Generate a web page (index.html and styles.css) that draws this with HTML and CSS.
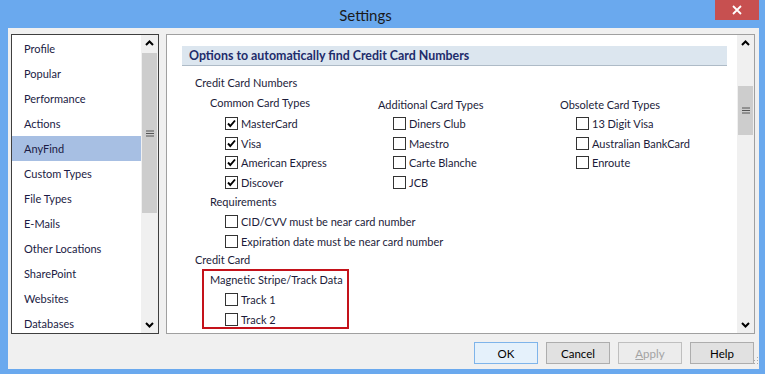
FILE: index.html
```html
<!DOCTYPE html>
<html lang="en">
<head>
  <meta charset="UTF-8" />
  <title>Settings</title>
  <link rel="stylesheet" href="styles.css">
</head>
<body>
  <div class="window">
    <div class="titlebar">
      <div class="title">Settings</div>
      <button class="close-btn">
        <svg width="10" height="10" viewBox="0 0 10 10"><path d="M1 1 L9 9 M9 1 L1 9" stroke="#fff" stroke-width="1.8"/></svg>
      </button>
    </div>

    <div class="dialog">
      <div class="main">
        <div class="nav">
          <ul class="nav-items">
            <li>Profile</li>
            <li>Popular</li>
            <li>Performance</li>
            <li>Actions</li>
            <li class="selected">AnyFind</li>
            <li>Custom Types</li>
            <li>File Types</li>
            <li>E-Mails</li>
            <li>Other Locations</li>
            <li>SharePoint</li>
            <li>Websites</li>
            <li>Databases</li>
          </ul>
          <div class="scrollbar">
            <div class="arrow">
              <svg width="17" height="17" viewBox="0 0 17 17"><path d="M5 10 L8.5 6.5 L12 10" fill="none" stroke="#000" stroke-width="2"/></svg>
            </div>
            <div class="thumb nav-thumb">
              <svg width="8" height="7" viewBox="0 0 8 7"><path d="M0 1 H8 M0 3.5 H8 M0 6 H8" stroke="#555" stroke-width="1"/></svg>
            </div>
            <div class="track"></div>
            <div class="arrow">
              <svg width="17" height="17" viewBox="0 0 17 17"><path d="M5 7 L8.5 10.5 L12 7" fill="none" stroke="#000" stroke-width="2"/></svg>
            </div>
          </div>
        </div>

        <div class="panel">
          <div class="panel-content">
            <div class="section-head">Options to automatically find Credit Card Numbers</div>

            <div class="label lvl1 first">Credit Card Numbers</div>

            <div class="cols">
              <div class="col col-common">
                <div class="col-head">Common Card Types</div>
                <div class="check"><span class="box on"><svg width="11" height="11" viewBox="0 0 11 11"><path d="M2 5.5 L4.3 8 L9 2.5" fill="none" stroke="#000" stroke-width="1.9"/></svg></span>MasterCard</div>
                <div class="check"><span class="box on"><svg width="11" height="11" viewBox="0 0 11 11"><path d="M2 5.5 L4.3 8 L9 2.5" fill="none" stroke="#000" stroke-width="1.9"/></svg></span>Visa</div>
                <div class="check"><span class="box on"><svg width="11" height="11" viewBox="0 0 11 11"><path d="M2 5.5 L4.3 8 L9 2.5" fill="none" stroke="#000" stroke-width="1.9"/></svg></span>American Express</div>
                <div class="check"><span class="box on"><svg width="11" height="11" viewBox="0 0 11 11"><path d="M2 5.5 L4.3 8 L9 2.5" fill="none" stroke="#000" stroke-width="1.9"/></svg></span>Discover</div>
              </div>
              <div class="col col-additional">
                <div class="col-head low">Additional Card Types</div>
                <div class="check"><span class="box"></span>Diners Club</div>
                <div class="check"><span class="box"></span>Maestro</div>
                <div class="check"><span class="box"></span>Carte Blanche</div>
                <div class="check"><span class="box"></span>JCB</div>
              </div>
              <div class="col col-obsolete">
                <div class="col-head low">Obsolete Card Types</div>
                <div class="check"><span class="box"></span>13 Digit Visa</div>
                <div class="check"><span class="box"></span>Australian BankCard</div>
                <div class="check"><span class="box"></span>Enroute</div>
              </div>
            </div>

            <div class="label lvl2 req">Requirements</div>
            <div class="check lvl3 row"><span class="box"></span>CID/CVV must be near card number</div>
            <div class="check lvl3 row"><span class="box"></span>Expiration date must be near card number</div>

            <div class="label lvl1 cc">Credit Card</div>
            <div class="track-box">
              <div class="track-head">Magnetic Stripe/Track Data</div>
              <div class="check row inset"><span class="box"></span>Track 1</div>
              <div class="check row inset"><span class="box"></span>Track 2</div>
            </div>
          </div>
          <div class="scrollbar">
            <div class="arrow">
              <svg width="17" height="17" viewBox="0 0 17 17"><path d="M5 10 L8.5 6.5 L12 10" fill="none" stroke="#000" stroke-width="2"/></svg>
            </div>
            <div class="track panel-gap"></div>
            <div class="thumb panel-thumb">
              <svg width="8" height="7" viewBox="0 0 8 7"><path d="M0 1 H8 M0 3.5 H8 M0 6 H8" stroke="#555" stroke-width="1"/></svg>
            </div>
            <div class="track"></div>
            <div class="arrow">
              <svg width="17" height="17" viewBox="0 0 17 17"><path d="M5 7 L8.5 10.5 L12 7" fill="none" stroke="#000" stroke-width="2"/></svg>
            </div>
          </div>
        </div>
      </div>

      <div class="footer">
        <button class="btn default">OK</button>
        <button class="btn">Cancel</button>
        <button class="btn disabled"><u>A</u>pply</button>
        <button class="btn">Help</button>
      </div>

      <svg class="grip" width="10" height="10" viewBox="0 0 10 10">
        <rect x="8" y="0" width="1" height="1" fill="#a8a8a8"/>
        <rect x="8" y="3" width="1" height="1" fill="#a8a8a8"/>
        <rect x="5" y="3" width="1" height="1" fill="#a8a8a8"/>
        <rect x="8" y="6" width="1" height="1" fill="#a8a8a8"/>
        <rect x="5" y="6" width="1" height="1" fill="#a8a8a8"/>
        <rect x="2" y="6" width="1" height="1" fill="#a8a8a8"/>
      </svg>
    </div>
  </div>
</body>
</html>
```

FILE: styles.css
```css
* {
  margin: 0;
  padding: 0;
  box-sizing: border-box;
}

body {
  width: 765px;
  height: 374px;
  overflow: hidden;
  font-family: Lato, "Noto Sans", sans-serif;
  font-size: 11px;
  color: #1c1c3a;
}

.window {
  width: 765px;
  height: 374px;
  background: #6aa9ee;
  display: flex;
  flex-direction: column;
}

.titlebar {
  height: 28px;
  display: flex;
  align-items: flex-start;
}

.title {
  flex: 1;
  text-align: center;
  padding-left: 16px;
  font-size: 15px;
  line-height: 30px;
  color: #1a1a1a;
}

.close-btn {
  width: 44px;
  height: 20px;
  margin-right: 6px;
  border: none;
  background: #c75050;
  display: flex;
  align-items: center;
  justify-content: center;
}

.dialog {
  position: relative;
  flex: 1;
  margin: 0 6px 5px 8px;
  background: #f0f0f0;
  padding: 6px 4px 0 3px;
  display: flex;
  flex-direction: column;
}

.main {
  display: flex;
  gap: 7px;
  height: 300px;
}

/* left list */
.nav {
  width: 148px;
  border: 1px solid #3f3f3f;
  background: #fff;
  display: flex;
  overflow: hidden;
}

.nav-items {
  flex: 1;
  list-style: none;
  padding-top: 1px;
  color: #1b1b44;
  font-size: 11px;
}

.nav-items li {
  height: 25px;
  line-height: 25px;
  padding-left: 12px;
}

.nav-items li.selected {
  background: #a7bfe3;
}

/* scrollbars */
.scrollbar {
  width: 17px;
  display: flex;
  flex-direction: column;
  background: #f0f0f0;
}

.arrow {
  height: 17px;
  display: flex;
}

.track {
  flex: 1;
}

.panel-gap {
  flex: 0 0 34px;
}

.thumb {
  background: #cdcdcd;
  display: flex;
  align-items: center;
  justify-content: center;
  margin: 0 1px;
}

.nav-thumb {
  height: 160px;
  margin-top: 1px;
}

.panel-thumb {
  height: 49px;
}

/* right panel */
.panel {
  width: 589px;
  border: 1px solid #a0a0a0;
  background: #fff;
  display: flex;
  overflow: hidden;
}

.panel-content {
  flex: 1;
  padding: 11px 10px 0 15px;
}

.section-head {
  height: 20px;
  line-height: 20px;
  background: #dce6ef;
  border-bottom: 1px solid #aebbc7;
  padding-left: 7px;
  font-weight: bold;
  font-size: 12.4px;
  color: #1e2c6b;
}

.label {
  height: 20px;
  line-height: 20px;
}

.lvl1 {
  padding-left: 13px;
}

.lvl2 {
  padding-left: 28px;
}

.first {
  margin-top: 7px;
}

.cols {
  display: flex;
  padding-left: 28px;
}

.col-common {
  width: 168px;
}

.col-additional {
  width: 182px;
}

.col-head {
  height: 21px;
  line-height: 20px;
}

.col-head.low {
  padding-top: 2px;
}

.check {
  display: flex;
  align-items: center;
  height: 19.5px;
  padding-left: 15px;
}

.col-obsolete .check {
  padding-left: 16px;
}

.box {
  width: 13px;
  height: 13px;
  border: 1px solid #333;
  background: #fff;
  margin-right: 3px;
  display: flex;
  align-items: center;
  justify-content: center;
  flex-shrink: 0;
}

.req {
  height: 19px;
  line-height: 19px;
}

.row {
  height: 20px;
}

.lvl3 {
  padding-left: 43px;
}

.cc {
  height: 18px;
  line-height: 18px;
}

.track-box {
  margin-left: 20px;
  width: 147px;
  height: 60px;
  border: 2px solid #c4121a;
  padding-left: 6px;
}

.track-head {
  height: 18px;
  line-height: 17px;
}

.inset {
  padding-left: 15px;
}

/* buttons */
.footer {
  margin-top: 8px;
  display: flex;
  justify-content: flex-end;
  gap: 8px;
  padding-right: 1px;
}

.btn {
  width: 64px;
  height: 22px;
  border: 1px solid #adadad;
  background: #e1e1e1;
  font-family: inherit;
  font-size: 11.5px;
  color: #000;
}

.btn.default {
  border-color: #7eb4ea;
  background: #e5f1fb;
}

.btn.disabled {
  border-color: #bfbfbf;
  background: #ececec;
  color: #a3a3a3;
}

.btn u {
  text-decoration-thickness: 1px;
}

.grip {
  position: absolute;
  right: 0;
  bottom: 2px;
}
```
